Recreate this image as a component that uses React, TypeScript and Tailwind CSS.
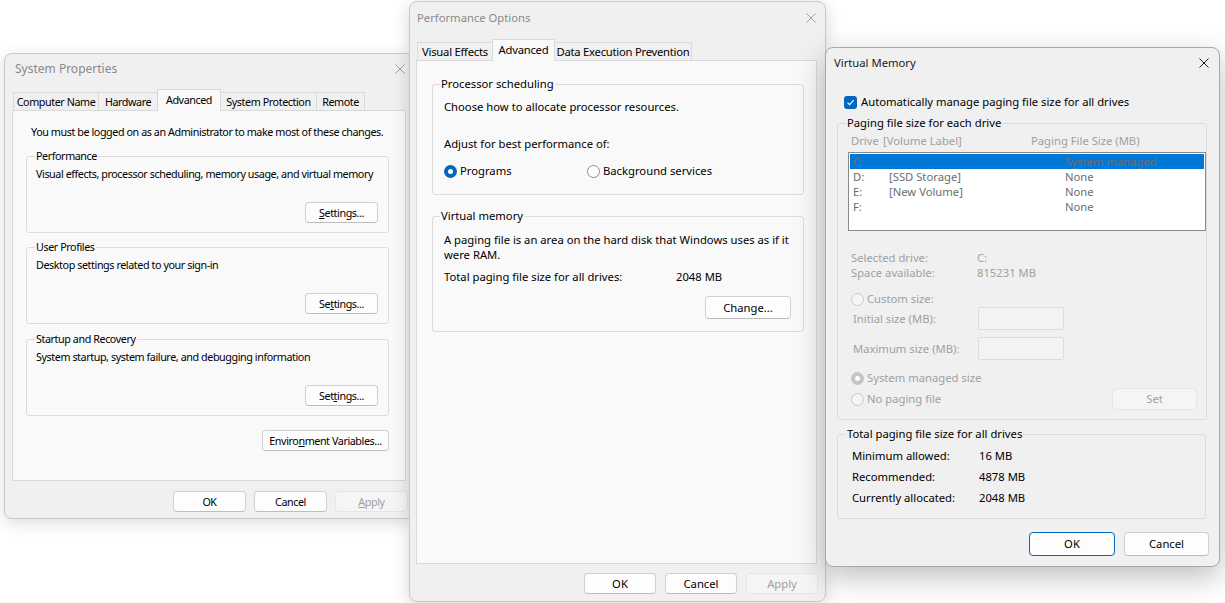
import React from 'react';

type Kids = { children?: React.ReactNode; className?: string };

function CloseX({ color }: { color: string }) {
  return (
    <svg width="10" height="10" viewBox="0 0 10 10" className="shrink-0">
      <path d="M0.5 0.5L9.5 9.5M9.5 0.5L0.5 9.5" stroke={color} strokeWidth="1" />
    </svg>
  );
}

function Btn({
  children,
  className = '',
  disabled,
  primary,
}: Kids & { disabled?: boolean; primary?: boolean }) {
  const look = disabled
    ? 'border-[#e5e5e5] bg-[#f5f5f5] text-[#a0a0a0]'
    : primary
      ? 'border-[#0067c0] bg-[#fdfdfd] text-black'
      : 'border-[#d0d0d0] border-b-[#bdbdbd] bg-[#fdfdfd] text-black';
  return (
    <div className={`flex shrink-0 items-center justify-center whitespace-nowrap rounded-[4px] border ${look} ${className}`}>
      {children}
    </div>
  );
}

function Radio({ checked, disabled }: { checked?: boolean; disabled?: boolean }) {
  if (checked) {
    return (
      <span
        className={`flex h-[13px] w-[13px] shrink-0 items-center justify-center rounded-full ${
          disabled ? 'bg-[#c5c5c5]' : 'bg-[#0067c0]'
        }`}
      >
        <span className="h-[5px] w-[5px] rounded-full bg-white" />
      </span>
    );
  }
  return (
    <span
      className={`h-[13px] w-[13px] shrink-0 rounded-full border ${
        disabled ? 'border-[#c8c8c8] bg-[#f5f5f5]' : 'border-[#8a8a8a] bg-white'
      }`}
    />
  );
}

function Group({ title, className = '', legendClass = 'ml-[8px] px-[1px]', children }: Kids & { title: string; legendClass?: string }) {
  return (
    <fieldset className={`rounded-[3px] border border-[#dcdcdc] ${className}`}>
      <legend className={`leading-[16px] ${legendClass}`}>{title}</legend>
      {children}
    </fieldset>
  );
}

type TabDef = { label: string; w: string; active?: boolean };

function Tabs({ tabs, className = '' }: { tabs: TabDef[]; className?: string }) {
  return (
    <div className={`flex items-end ${className}`}>
      {tabs.map((t) =>
        t.active ? (
          <div
            key={t.label}
            className={`relative z-10 -mb-px -mr-px flex h-[22px] items-center justify-center whitespace-nowrap border border-b-0 border-[#d9d9d9] bg-[#f9f9f9] pb-[1px] ${t.w}`}
          >
            {t.label}
          </div>
        ) : (
          <div
            key={t.label}
            className={`-mr-px flex h-[18px] items-center justify-center whitespace-nowrap border border-b-0 border-[#d9d9d9] bg-[#f0f0f0] ${t.w}`}
          >
            {t.label}
          </div>
        ),
      )}
    </div>
  );
}

function SettingsGroup({ title, text, btn }: { title: string; text: string; btn: React.ReactNode }) {
  return (
    <Group title={title} className="ml-[13px] w-[363px] pb-[9px]">
      <div className="flex flex-col">
        <div className="mt-[2px] pl-[9px] leading-[16px]">{text}</div>
        <Btn className="mr-[10px] mt-[20px] h-[21px] w-[73px] self-end">{btn}</Btn>
      </div>
    </Group>
  );
}

function SystemProperties() {
  return (
    <div className="absolute left-[4px] top-[53px] z-[1] flex h-[466px] w-[410px] flex-col rounded-[8px] border border-[#c8c8c8] bg-[#f0f0f0] text-[10.75px] tracking-[-0.42px] shadow-[0_4px_16px_rgba(0,0,0,0.14)]">
      <div className="flex h-[29px] items-center justify-between pl-[10px] pr-[8px] text-[12px] tracking-normal text-[#8a8a8a]">
        <span>System Properties</span>
        <CloseX color="#a0a0a0" />
      </div>
      <div className="ml-[8px] mt-[6px]">
        <Tabs
          tabs={[
            { label: 'Computer Name', w: 'w-[86px]' },
            { label: 'Hardware', w: 'w-[60px]' },
            { label: 'Advanced', w: 'w-[64px]', active: true },
            { label: 'System Protection', w: 'w-[97px]' },
            { label: 'Remote', w: 'w-[49px]' },
          ]}
        />
      </div>
      <div className="mx-[7px] flex h-[371px] flex-col border border-[#d9d9d9] bg-[#f9f9f9]">
        <div className="mt-[13px] pl-[18px] leading-[16px]">
          You must be logged on as an Administrator to make most of these changes.
        </div>
        <div className="mt-[8px]">
          <SettingsGroup
            title="Performance"
            text="Visual effects, processor scheduling, memory usage, and virtual memory"
            btn={
              <span>
                <u>S</u>ettings...
              </span>
            }
          />
        </div>
        <div className="mt-[6px]">
          <SettingsGroup
            title="User Profiles"
            text="Desktop settings related to your sign-in"
            btn={
              <span>
                Se<u>t</u>tings...
              </span>
            }
          />
        </div>
        <div className="mt-[7px]">
          <SettingsGroup
            title="Startup and Recovery"
            text="System startup, system failure, and debugging information"
            btn={
              <span>
                Set<u>t</u>ings...
              </span>
            }
          />
        </div>
        <Btn className="mr-[16px] mt-[14px] h-[21px] w-[127px] self-end">
          <span>
            Enviro<u>n</u>ment Variables...
          </span>
        </Btn>
      </div>
      <div className="mt-[10px] flex gap-[8px] pl-[168px]">
        <Btn className="h-[21px] w-[73px]">OK</Btn>
        <Btn className="h-[21px] w-[73px]">Cancel</Btn>
        <Btn className="h-[21px] w-[73px]" disabled>
          <span>
            <u>A</u>pply
          </span>
        </Btn>
      </div>
    </div>
  );
}

function PerformanceOptions() {
  return (
    <div className="absolute left-[409px] top-[1px] z-[2] flex h-[601px] w-[417px] flex-col rounded-[8px] border border-[#c8c8c8] bg-[#f0f0f0] shadow-[0_4px_18px_rgba(0,0,0,0.16)]">
      <div className="flex h-[31px] items-center justify-between pl-[7px] pr-[9px] text-[#8a8a8a]">
        <span>Performance Options</span>
        <CloseX color="#a0a0a0" />
      </div>
      <div className="ml-[7px] mt-[6px]">
        <Tabs
          className="tracking-[-0.25px]"
          tabs={[
            { label: 'Visual Effects', w: 'w-[76px]' },
            { label: 'Advanced', w: 'w-[63px]', active: true },
            { label: 'Data Execution Prevention', w: 'w-[138px]' },
          ]}
        />
      </div>
      <div className="ml-[6px] mr-[8px] flex h-[504px] flex-col border border-[#d9d9d9] bg-[#f9f9f9]">
        <Group title="Processor scheduling" className="ml-[15px] mt-[15px] w-[372px] pb-[15px]" legendClass="ml-[7px] px-[1px]">
          <div className="pl-[11px] leading-[16px]">
            <div className="mt-[7px]">Choose how to allocate processor resources.</div>
            <div className="mt-[21px]">Adjust for best performance of:</div>
            <div className="mt-[11px] flex items-center">
              <div className="flex w-[143px] items-center gap-[3px]">
                <Radio checked />
                <span>Programs</span>
              </div>
              <div className="flex items-center gap-[3px]">
                <Radio />
                <span>Background services</span>
              </div>
            </div>
          </div>
        </Group>
        <Group title="Virtual memory" className="ml-[15px] mt-[13px] w-[372px] pb-[12px]" legendClass="ml-[7px] px-[1px]">
          <div className="flex flex-col pl-[11px]">
            <div className="mt-[8px] leading-[15px]">
              A paging file is an area on the hard disk that Windows uses as if it
              <br />
              were RAM.
            </div>
            <div className="mt-[7px] flex leading-[16px]">
              <span className="w-[232px]">Total paging file size for all drives:</span>
              <span>2048 MB</span>
            </div>
            <Btn className="mr-[12px] mt-[11px] h-[23px] w-[86px] self-end">Change...</Btn>
          </div>
        </Group>
      </div>
      <div className="mt-[9px] flex justify-end gap-[9px] pr-[7px]">
        <Btn className="h-[21px] w-[72px]">OK</Btn>
        <Btn className="h-[21px] w-[72px]">Cancel</Btn>
        <Btn className="h-[21px] w-[72px]" disabled>
          Apply
        </Btn>
      </div>
    </div>
  );
}

const drives = [
  { d: 'C:', label: '', size: 'System managed', sel: true },
  { d: 'D:', label: '[SSD Storage]', size: 'None' },
  { d: 'E:', label: '[New Volume]', size: 'None' },
  { d: 'F:', label: '', size: 'None' },
];

function VirtualMemory() {
  return (
    <div className="absolute left-[825px] top-[47px] z-[3] flex h-[520px] w-[395px] flex-col rounded-[8px] border border-[#a8a8a8] bg-[#f0f0f0] shadow-[0_10px_30px_rgba(0,0,0,0.26)]">
      <div className="flex h-[29px] items-center justify-between pl-[8px] pr-[10px] text-[#1a1a1a]">
        <span>Virtual Memory</span>
        <CloseX color="#1a1a1a" />
      </div>
      <div className="mt-[17px] flex h-[16px] items-center gap-[4px] pl-[18px]">
        <span className="flex h-[13px] w-[13px] items-center justify-center rounded-[3px] bg-[#0067c0]">
          <svg width="9" height="9" viewBox="0 0 9 9">
            <path d="M1.5 4.6L3.6 6.6L7.6 2.2" fill="none" stroke="white" strokeWidth="1.1" />
          </svg>
        </span>
        <span>Automatically manage paging file size for all drives</span>
      </div>
      <Group title="Paging file size for each drive" className="ml-[11px] mt-[5px] w-[369px] pb-[9px]">
        <div className="flex flex-col">
          <div className="mt-[2px] flex pl-[13px] leading-[16px] text-[#a0a0a0]">
            <span className="w-[32px]">Drive</span>
            <span className="w-[148px]">[Volume Label]</span>
            <span>Paging File Size (MB)</span>
          </div>
          <div className="ml-[10px] mt-[3px] h-[79px] w-[358px] border border-[#8a8a8a] bg-white p-px">
            {drives.map((r) => (
              <div
                key={r.d}
                className={`flex h-[15px] pl-[3px] leading-[15px] text-[#6d6d6d] ${r.sel ? 'bg-[#0078d7]' : ''}`}
              >
                <span className="w-[36px]">{r.d}</span>
                <span className="w-[176px]">{r.label}</span>
                <span>{r.size}</span>
              </div>
            ))}
          </div>
          <div className="mt-[19px] pl-[13px] leading-[15px] text-[#a0a0a0]">
            <div className="flex">
              <span className="w-[126px]">Selected drive:</span>
              <span>C:</span>
            </div>
            <div className="flex">
              <span className="w-[126px]">Space available:</span>
              <span>815231 MB</span>
            </div>
          </div>
          <div className="mt-[11px] flex h-[16px] items-center gap-[3px] pl-[13px] text-[#a0a0a0]">
            <Radio disabled />
            <span>Custom size:</span>
          </div>
          <div className="flex h-[23px] items-center pl-[15px] text-[#a0a0a0]">
            <span className="w-[125px]">Initial size (MB):</span>
            <span className="h-[23px] w-[86px] rounded-[2px] border border-[#dcdcdc] bg-[#f3f3f3]" />
          </div>
          <div className="mt-[7px] flex h-[23px] items-center pl-[15px] text-[#a0a0a0]">
            <span className="w-[125px]">Maximum size (MB):</span>
            <span className="h-[23px] w-[86px] rounded-[2px] border border-[#dcdcdc] bg-[#f3f3f3]" />
          </div>
          <div className="mt-[10px] flex h-[16px] items-center gap-[3px] pl-[13px] text-[#a0a0a0]">
            <Radio checked disabled />
            <span>System managed size</span>
          </div>
          <div className="mt-[2px] flex h-[22px] items-center justify-between pl-[13px] pr-[9px] text-[#a0a0a0]">
            <div className="flex items-center gap-[3px]">
              <Radio disabled />
              <span>No paging file</span>
            </div>
            <Btn className="h-[22px] w-[85px]" disabled>
              Set
            </Btn>
          </div>
        </div>
      </Group>
      <Group title="Total paging file size for all drives" className="ml-[11px] mt-[6px] w-[369px] pb-[10px]">
        <div className="mt-[3px] pl-[14px] leading-[21px]">
          <div className="flex">
            <span className="w-[127px]">Minimum allowed:</span>
            <span>16 MB</span>
          </div>
          <div className="flex">
            <span className="w-[127px]">Recommended:</span>
            <span>4878 MB</span>
          </div>
          <div className="flex">
            <span className="w-[127px]">Currently allocated:</span>
            <span>2048 MB</span>
          </div>
        </div>
      </Group>
      <div className="mt-[13px] flex justify-end gap-[9px] pr-[10px]">
        <Btn className="h-[24px] w-[86px]" primary>
          OK
        </Btn>
        <Btn className="h-[24px] w-[85px]">Cancel</Btn>
      </div>
    </div>
  );
}

export default function App() {
  return (
    <div className="relative h-[603px] w-[1225px] overflow-hidden bg-white font-['Noto_Sans',sans-serif] text-[11.25px] leading-[16px] text-black">
      <SystemProperties />
      <PerformanceOptions />
      <VirtualMemory />
    </div>
  );
}
